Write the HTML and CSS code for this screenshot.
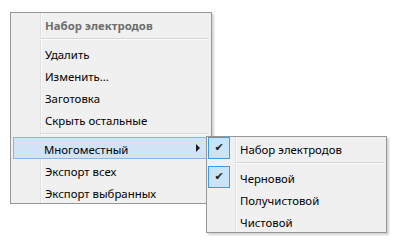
FILE: index.html
```html
<!DOCTYPE html>
<html>
<head>
  <title>Контекстное меню</title>
  <meta charset="UTF-8" />
  <link rel="stylesheet" href="styles.css">
</head>
<body>
  <div class="menu main-menu">
    <div class="menu-item menu-header">Набор электродов</div>
    <div class="menu-sep"></div>
    <div class="menu-item">Удалить</div>
    <div class="menu-item">Изменить...</div>
    <div class="menu-item">Заготовка</div>
    <div class="menu-item">Скрыть остальные</div>
    <div class="menu-sep"></div>
    <div class="menu-item active">
      <span>Многоместный</span>
      <span class="arrow"></span>
    </div>
    <div class="menu-item">Экспорт всех</div>
    <div class="menu-item">Экспорт выбранных</div>
  </div>

  <!-- submenu of "Многоместный" -->
  <div class="menu sub-menu">
    <div class="menu-item checked"><span class="check">&#10004;</span>Набор электродов</div>
    <div class="menu-sep"></div>
    <div class="menu-item checked"><span class="check">&#10004;</span>Черновой</div>
    <div class="menu-item">Получистовой</div>
    <div class="menu-item">Чистовой</div>
  </div>
</body>
</html>
```

FILE: styles.css
```css
:root {
  --menu-bg: #f0f0f0;
  --menu-border: #979797;
  --gutter-line: #e0e0e0;
  --hover-bg: #d1e3f4;
  --hover-border: #85b8ea;
  --check-bg: #c9e3f7;
  --check-border: #3c9be8;
}

body {
  margin: 0;
  padding: 0;
  background: #fff;
  font-family: "Noto Sans", "DejaVu Sans", sans-serif;
  font-size: 11.4px;
  color: #000;
}

.menu {
  background-color: var(--menu-bg);
  border: 1px solid var(--menu-border);
  box-shadow: 2px 2px 2px rgba(0, 0, 0, 0.18);
  box-sizing: border-box;
}

/* Main context menu */
.main-menu {
  width: 202px;
  margin: 12px 0 0 10px;
  background-image: linear-gradient(to right,
    transparent 29px, var(--gutter-line) 29px,
    var(--gutter-line) 30px, #fafafa 30px,
    #fafafa 31px, transparent 31px);
}

.menu-item {
  height: 22px;
  box-sizing: border-box;
  padding-top: 2px;
  line-height: 21px;
  padding-left: 34px;
  white-space: nowrap;
  position: relative;
}

.menu-header {
  font-weight: bold;
  color: #6d6d6d;
}

.menu-sep {
  height: 7px;
  margin-left: 29px;
  margin-right: 2px;
  background: linear-gradient(to bottom,
    transparent 3px, #d7d7d7 3px,
    #d7d7d7 4px, #fcfcfc 4px,
    #fcfcfc 5px, transparent 5px);
}

.menu-item.active {
  margin: 0 2px;
  padding-left: 31px;
  background-color: var(--hover-bg);
  box-shadow: inset 0 0 0 1px var(--hover-border);
}

.arrow {
  position: absolute;
  right: 9px;
  top: 7px;
  width: 0;
  height: 0;
  border-top: 4px solid transparent;
  border-bottom: 4px solid transparent;
  border-left: 4px solid #1a1a1a;
}

/* Submenu opened from "Многоместный" */
.sub-menu {
  position: absolute;
  left: 206px;
  top: 136px;
  width: 181px;
  background-image: linear-gradient(to right,
    transparent 28px, var(--gutter-line) 28px,
    var(--gutter-line) 29px, #fafafa 29px,
    #fafafa 30px, transparent 30px);
}

.sub-menu .menu-item {
  padding-left: 33px;
}

.sub-menu .menu-sep {
  margin-left: 28px;
}

.check {
  position: absolute;
  left: 1px;
  top: 0;
  width: 20px;
  height: 20px;
  border: 1px solid var(--check-border);
  background-color: var(--check-bg);
  color: #222;
  font-family: "DejaVu Sans", sans-serif;
  font-size: 11px;
  line-height: 20px;
  text-align: center;
}
```
